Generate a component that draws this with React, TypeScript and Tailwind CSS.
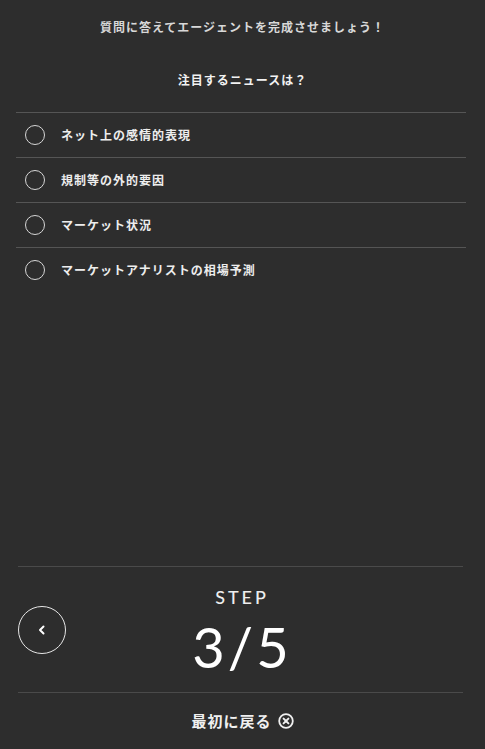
import React from "react";

const jp = "font-['Noto_Sans_CJK_JP','Noto_Sans',sans-serif]";

const options = [
  "ネット上の感情的表現",
  "規制等の外的要因",
  "マーケット状況",
  "マーケットアナリストの相場予測",
];

const CloseCircle = () => (
  <svg width="16" height="16" viewBox="0 0 16 16" fill="none" stroke="currentColor" strokeLinecap="round">
    <circle cx="8" cy="8" r="6.8" strokeWidth="1.8" />
    <path d="M5.6 5.6 L10.4 10.4 M10.4 5.6 L5.6 10.4" strokeWidth="2" />
  </svg>
);

const ChevronLeft = () => (
  <svg width="12" height="12" viewBox="0 0 12 12" fill="none" stroke="currentColor" strokeWidth="2" strokeLinecap="round" strokeLinejoin="round">
    <polyline points="7.5 2.5 4 6 7.5 9.5" />
  </svg>
);

export default function App() {
  return (
    <div className={`flex h-[749px] w-full flex-col bg-[#2d2d2d] text-white ${jp}`}>
      {/* Header */}
      <p className="mt-[18px] text-center text-[12px] leading-[18px] font-bold tracking-[1px] text-[#d8d8d8]">
        質問に答えてエージェントを完成させましょう！
      </p>
      <p className="mt-[35px] text-center text-[12px] leading-[18px] font-bold tracking-[1px] text-[#f2f2f2]">
        注目するニュースは？
      </p>

      {/* Options */}
      <ul className="mt-[23px] ml-4 mr-[19px]">
        {options.map((label) => (
          <li
            key={label}
            className="flex h-[45px] items-center gap-4 border-t border-[#555555] pl-[9px]"
          >
            <span className="h-[20px] w-[20px] shrink-0 rounded-full border-[1.5px] border-[#d6d6d6]" />
            <span className="text-[12px] font-bold tracking-[1px] text-[#ededed]">{label}</span>
          </li>
        ))}
      </ul>

      <div className="flex-1" />

      {/* Step footer */}
      <div className="ml-[18px] mr-[22px] grid h-[127px] grid-cols-[48px_1fr_48px] items-center border-t border-b border-[#4a4a4a]">
        <button className="flex h-[48px] w-[48px] items-center justify-center rounded-full border border-[#e6e6e6] text-white">
          <ChevronLeft />
        </button>
        <div className="flex flex-col items-center font-['Lato',sans-serif]">
          <span className="text-[18px] leading-[20px] font-medium tracking-[3px] pl-[3px] text-[#eeeeee]">STEP</span>
          <span className="mt-[14px] text-[56px] leading-[52px] font-normal tracking-[3px] pl-[3px] text-white">3/5</span>
        </div>
        <div />
      </div>

      <button className="flex h-[56px] items-center justify-center gap-[6px] text-[15px] font-bold tracking-[1px] text-[#f0f0f0]">
        <span>最初に戻る</span>
        <CloseCircle />
      </button>
    </div>
  );
}
